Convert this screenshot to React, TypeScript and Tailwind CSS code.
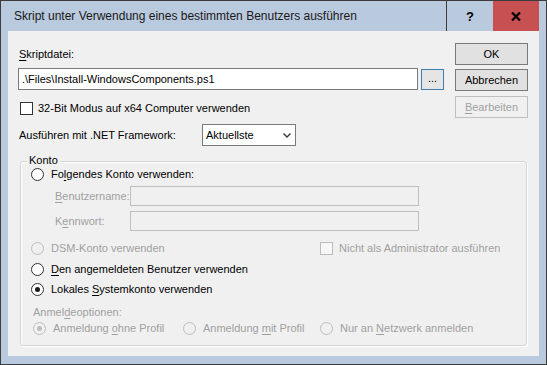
const font = { fontFamily: '"Liberation Sans", Arial, sans-serif' };

function U({ children }: { children: string }) {
  return <span className="underline underline-offset-[2px]">{children}</span>;
}

function Radio({ checked = false, disabled = false }: { checked?: boolean; disabled?: boolean }) {
  return (
    <span
      className={`flex h-[13px] w-[13px] shrink-0 items-center justify-center rounded-full border ${
        disabled ? "border-[#bcbcbc] bg-[#f0f0f0]" : "border-[#333333] bg-white"
      }`}
    >
      {checked && (
        <span className={`h-[5px] w-[5px] rounded-full ${disabled ? "bg-[#bcbcbc]" : "bg-[#1a1a1a]"}`} />
      )}
    </span>
  );
}

function Check({ disabled = false }: { disabled?: boolean }) {
  return (
    <span
      className={`h-[13px] w-[13px] shrink-0 border ${
        disabled ? "border-[#bcbcbc] bg-[#f7f7f7]" : "border-[#333333] bg-white"
      }`}
    />
  );
}

function WinButton({ children, disabled = false }: { children: React.ReactNode; disabled?: boolean }) {
  return (
    <div
      className={`flex h-[22px] w-[73px] items-center justify-center border text-[11px] ${
        disabled ? "border-[#bfbfbf] bg-[#f0f0f0] text-[#a0a0a0]" : "border-[#7a7a7a] bg-[#e1e1e1] text-black"
      }`}
    >
      {children}
    </div>
  );
}

export default function App() {
  return (
    <div
      className="flex h-[365px] w-[547px] flex-col border border-[#3c3c3c] bg-[#b9c9de] text-[11px] leading-[13px] text-black"
      style={font}
    >
      {/* title bar */}
      <div className="flex h-[30px] items-center">
        <div className="flex-1 pl-[13px] text-[12px] text-[#1a1a1a]">
          Skript unter Verwendung eines bestimmten Benutzers ausführen
        </div>
        <div className="flex h-[31px] self-start border-b border-l border-[#3c3c3c]">
          <div className="flex w-[46px] items-center justify-center text-[13px] font-bold">?</div>
          <div className="flex w-[46px] items-center justify-center bg-[#c75050]">
            <svg width="10" height="9" viewBox="0 0 10 9">
              <path d="M1 0.5 L9 8.5 M9 0.5 L1 8.5" stroke="#000" strokeWidth="2.2" />
            </svg>
          </div>
        </div>
        <div className="w-[7px]" />
      </div>

      {/* client */}
      <div className="mx-[7px] mb-[8px] flex flex-1 flex-col bg-[#f0f0f0]">
        <div className="flex">
          <div className="flex flex-col pl-[10px] pt-[17px]">
            <div className="ml-[1px]">
              <U>S</U>kriptdatei:
            </div>
            <div className="mt-[7px] flex items-start">
              <div className="flex h-[22px] w-[400px] items-center border border-[#7a7a7a] bg-white pl-[3px]">
                .\Files\Install-WindowsComponents.ps1
              </div>
              <div className="ml-[3px] mt-[1px] flex h-[21px] w-[23px] items-center justify-center border border-[#3c7fb1] bg-[#e5e5e5] pb-[3px]">
                ...
              </div>
            </div>
            <div className="mt-[12px] flex items-center gap-[5px] pl-[2px]">
              <Check />
              <span>32-Bit Modus auf x64 Computer verwenden</span>
            </div>
            <div className="mt-[9px] flex items-center">
              <span className="w-[184px] pl-[1px]">Ausführen mit .NET Framework:</span>
              <div className="flex h-[22px] w-[94px] items-center justify-between border border-[#7a7a7a] bg-white pl-[3px] pr-[4px]">
                <span>Aktuellste</span>
                <svg width="8" height="5" viewBox="0 0 8 5">
                  <path d="M0.5 0.5 L4 4 L7.5 0.5" stroke="#333" strokeWidth="1.3" fill="none" />
                </svg>
              </div>
            </div>
          </div>
          <div className="ml-auto flex flex-col gap-[4px] pr-[11px] pt-[12px]">
            <WinButton>OK</WinButton>
            <WinButton>Abbrechen</WinButton>
            <div className="mt-[1px]">
              <WinButton disabled>
                <span>
                  <U>B</U>earbeiten
                </span>
              </WinButton>
            </div>
          </div>
        </div>

        {/* Konto group */}
        <div className="relative ml-[12px] mt-[15px] h-[185px] w-[507px] rounded-[3px] border border-[#d5d5d5] shadow-[inset_1px_1px_0_#ffffff,1px_1px_0_#ffffff]">
          <span className="absolute -top-[8px] left-[6px] bg-[#f0f0f0] px-[2px]">Konto</span>
          <div className="flex flex-col pl-[10px] pt-[6px]">
            <div className="flex items-center gap-[7px]">
              <Radio />
              <span>
                Fo<U>l</U>gendes Konto verwenden:
              </span>
            </div>
            <div className="mt-[5px] flex items-center text-[#a0a0a0]">
              <span className="w-[99px] pl-[24px]">
                <U>B</U>enutzername:
              </span>
              <div className="h-[20px] w-[289px] border border-[#bfbfbf] bg-[#f0f0f0]" />
            </div>
            <div className="mt-[5px] flex items-center text-[#a0a0a0]">
              <span className="w-[99px] pl-[24px]">
                K<U>e</U>nnwort:
              </span>
              <div className="h-[20px] w-[289px] border border-[#bfbfbf] bg-[#f0f0f0]" />
            </div>
            <div className="mt-[11px] flex items-center text-[#a0a0a0]">
              <div className="flex w-[289px] items-center gap-[7px]">
                <Radio disabled />
                <span>DSM-Konto verwenden</span>
              </div>
              <div className="flex items-center gap-[6px]">
                <Check disabled />
                <span>Nicht als Administrator ausführen</span>
              </div>
            </div>
            <div className="mt-[8px] flex items-center gap-[7px]">
              <Radio />
              <span>
                <U>D</U>en angemeldeten Benutzer verwenden
              </span>
            </div>
            <div className="mt-[7px] flex items-center gap-[7px]">
              <Radio checked />
              <span>
                Lokales <U>S</U>ystemkonto verwenden
              </span>
            </div>
            <div className="mt-[10px] pl-[2px] text-[#a0a0a0]">
              Anmel<U>d</U>eoptionen:
            </div>
            <div className="mt-[3px] flex items-center pl-[2px] text-[#a0a0a0]">
              <div className="flex w-[150px] items-center gap-[7px]">
                <Radio checked disabled />
                <span>
                  Anmeldung <U>o</U>hne Profil
                </span>
              </div>
              <div className="flex w-[137px] items-center gap-[7px]">
                <Radio disabled />
                <span>
                  Anmeldung <U>m</U>it Profil
                </span>
              </div>
              <div className="flex items-center gap-[7px]">
                <Radio disabled />
                <span>
                  Nur an <U>N</U>etzwerk anmelden
                </span>
              </div>
            </div>
          </div>
        </div>
      </div>
    </div>
  );
}
